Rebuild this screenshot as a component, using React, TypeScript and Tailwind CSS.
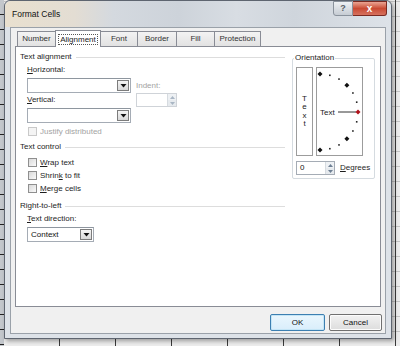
import React from 'react';

const font = "font-['Liberation_Sans',Arial,sans-serif]";

function U({ children }: { children: React.ReactNode }) {
  return <span className="underline underline-offset-[1px]">{children}</span>;
}

function SectionHeader({ label }: { label: string }) {
  return (
    <div className="flex h-[10px] items-center">
      <span className="leading-[10px] text-[#1e1e1e]">{label}</span>
      <div className="ml-[4px] h-px flex-1 bg-[#dddddd]" />
    </div>
  );
}

function DropArrow() {
  return (
    <svg width="7" height="5" viewBox="0 0 7 5">
      <path d="M0.5 1 H6.5 L3.5 4.5 Z" fill="#111" />
    </svg>
  );
}

function Combo({ width, value }: { width: string; value?: string }) {
  return (
    <div className={`flex h-[15px] ${width} border border-[#a5acb5] border-t-[#8e969f] bg-white`}>
      <div className="flex flex-1 items-center pl-[3px] leading-[10px] text-[#111]">{value}</div>
      <div className="m-px flex w-[12px] items-center justify-center border border-[#7c7c7c] bg-gradient-to-b from-[#f5f5f5] to-[#d8d8d8]">
        <DropArrow />
      </div>
    </div>
  );
}

function Spin({ width, value, disabled }: { width: string; value?: string; disabled?: boolean }) {
  return (
    <div className={`flex h-[14px] ${width} border ${disabled ? 'border-[#cfd3d8]' : 'border-[#a5acb5]'} bg-white`}>
      <div className="flex flex-1 items-center pl-[3px] leading-[10px] text-[#111]">{value}</div>
      <div className="flex w-[9px] flex-col border-l border-[#d6dbe0]">
        <div className="flex flex-1 items-center justify-center bg-[#eef1f4]">
          <svg width="5" height="3" viewBox="0 0 5 3">
            <path d="M0 3 L2.5 0 L5 3 Z" fill={disabled ? '#a9b6c4' : '#6d7f93'} />
          </svg>
        </div>
        <div className="flex flex-1 items-center justify-center bg-[#e6eaee]">
          <svg width="5" height="3" viewBox="0 0 5 3">
            <path d="M0 0 L2.5 3 L5 0 Z" fill={disabled ? '#a9b6c4' : '#6d7f93'} />
          </svg>
        </div>
      </div>
    </div>
  );
}

function Check({ children, disabled }: { children: React.ReactNode; disabled?: boolean }) {
  return (
    <div className="flex h-[9px] items-center pl-[1px]">
      <div
        className={`h-[9px] w-[9px] border ${
          disabled ? 'border-[#c9c9c9] bg-[#f4f4f4]' : 'border-[#8f8f8f] bg-gradient-to-br from-[#d9d9d9] to-[#fafafa]'
        }`}
      />
      <span className={`ml-[3px] leading-[10px] ${disabled ? 'text-[#a3a3a3]' : 'text-[#1e1e1e]'}`}>{children}</span>
    </div>
  );
}

const tabs = [
  { label: 'Number', w: 'w-[39px]' },
  { label: 'Alignment', w: 'w-[46px]', active: true },
  { label: 'Font', w: 'w-[38px]' },
  { label: 'Border', w: 'w-[39px]' },
  { label: 'Fill', w: 'w-[38px]' },
  { label: 'Protection', w: 'w-[46px]' },
];

function OrientationDial() {
  const cx = 3;
  const cy = 44;
  const r = 38;
  const pts = [90, 75, 60, 45, 30, 15, 0, -15, -30, -45, -60, -75, -90];
  return (
    <svg width="45" height="87" viewBox="0 0 45 87">
      {pts.map((a) => {
        const rad = (a * Math.PI) / 180;
        const x = cx + r * Math.cos(rad);
        const y = cy - r * Math.sin(rad);
        if (a === 0) {
          return <path key={a} d={`M${x} ${y - 2.5} L${x + 2.5} ${y} L${x} ${y + 2.5} L${x - 2.5} ${y} Z`} fill="#b0121b" />;
        }
        if (a % 45 === 0) {
          return <path key={a} d={`M${x} ${y - 2.5} L${x + 2.5} ${y} L${x} ${y + 2.5} L${x - 2.5} ${y} Z`} fill="#111" />;
        }
        return <rect key={a} x={x - 0.8} y={y - 0.8} width="1.6" height="1.6" fill="#222" />;
      })}
      <text x="3" y="47" fontSize="8" fontFamily="Liberation Sans, Arial, sans-serif" fill="#222">
        Text
      </text>
      <line x1="21" y1="44" x2="39" y2="44" stroke="#333" strokeWidth="1" />
    </svg>
  );
}

export default function App() {
  return (
    <div
      className={`flex h-[346px] w-[400px] overflow-hidden bg-[#ececec] bg-[repeating-linear-gradient(0deg,transparent_0px,transparent_14px,#c4c4c4_14px,#c4c4c4_15px)] text-[8px] ${font}`}
    >
      {/* row header strip of the sheet behind */}
      <div className="h-full w-[4px] shrink-0 bg-[#c3c7cc] bg-[repeating-linear-gradient(180deg,#c3c7cc_0px,#c3c7cc_14px,#222_14px,#222_15px)]" />

      <div className="flex h-full flex-1 flex-col bg-[repeating-linear-gradient(90deg,transparent_0px,transparent_55px,#3a3a3a_55px,#3a3a3a_56px)]">
        {/* dialog window */}
        <div className="flex h-[339px] w-[388px] flex-col rounded-t-[6px] border border-[#5e6570] bg-[#dde2e8] shadow-[2px_2px_4px_rgba(0,0,0,0.35)]">
          {/* title bar */}
          <div className="relative flex h-[26px] items-start rounded-t-[6px] bg-[linear-gradient(90deg,#e9e0cf_0%,#e3ddd3_18%,#d4d9df_28%,#cdd3da_45%,#d8dde3_60%,#cfd5dc_75%,#dde2e8_100%)]">
            <span className="ml-[7px] mt-[8px] text-[8.5px] leading-[10px] text-[#111]">Format Cells</span>
            <div className="ml-auto mr-[4px] flex">
              <div className="flex h-[15px] w-[20px] items-center justify-center rounded-bl-[3px] border border-[#8a929c] bg-gradient-to-b from-[#eef1f4] to-[#c6ccd3] text-[9px] font-bold text-[#5a5f66]">
                ?
              </div>
              <div className="flex h-[15px] w-[34px] items-center justify-center rounded-br-[3px] border border-l-0 border-[#7a2a22] bg-gradient-to-b from-[#e9a493] via-[#c94a33] to-[#d6715e] text-[10px] font-bold leading-none text-white">
                x
              </div>
            </div>
          </div>

          {/* client area */}
          <div className="mx-[5px] flex h-[307px] flex-col border border-[#9aa1a9] bg-[#f0f0f0]">
            {/* tabs */}
            <div className="ml-[6px] mt-[2px] flex h-[16px] items-end">
              {tabs.map((t) =>
                t.active ? (
                  <div
                    key={t.label}
                    className={`relative z-10 -mx-[1px] -mb-px flex h-[17px] ${t.w} items-start justify-center border border-b-0 border-[#898c95] bg-white pt-[3px] leading-[10px] text-[#222]`}
                  >
                    <span className="border border-dotted border-[#555] px-[1px] leading-[9px]">{t.label}</span>
                  </div>
                ) : (
                  <div
                    key={t.label}
                    className={`flex h-[15px] ${t.w} items-center justify-center border border-b-0 border-[#898c95] bg-gradient-to-b from-[#f3f3f3] to-[#e2e2e2] leading-[10px] text-[#333] [&+&]:border-l-0`}
                  >
                    {t.label}
                  </div>
                ),
              )}
            </div>

            {/* tab page */}
            <div className="mx-[4px] flex h-[261px] border border-[#898c95] bg-white">
              {/* left column */}
              <div className="flex w-[269px] flex-col pl-[4px] pt-[5px]">
                <SectionHeader label="Text alignment" />
                <div className="mt-[3px] flex pl-[7px]">
                  <div className="flex flex-col">
                    <span className="h-[10px] leading-[10px] text-[#1e1e1e]">
                      <U>H</U>orizontal:
                    </span>
                    <div className="mt-[3px]">
                      <Combo width="w-[104px]" />
                    </div>
                    <span className="mt-[2px] h-[10px] leading-[10px] text-[#1e1e1e]">
                      <U>V</U>ertical:
                    </span>
                    <div className="mt-[3px]">
                      <Combo width="w-[104px]" />
                    </div>
                  </div>
                  <div className="ml-[5px] flex flex-col pt-[16px]">
                    <span className="h-[10px] leading-[10px] text-[#a3a3a3]">Indent:</span>
                    <div className="mt-[2px]">
                      <Spin width="w-[41px]" disabled />
                    </div>
                  </div>
                </div>
                <div className="mt-[4px] pl-[7px]">
                  <Check disabled>Justify distributed</Check>
                </div>

                <div className="mt-[6px]">
                  <SectionHeader label="Text control" />
                </div>
                <div className="mt-[6px] flex flex-col gap-[4px] pl-[7px]">
                  <Check>
                    <U>W</U>rap text
                  </Check>
                  <Check>
                    Shrin<U>k</U> to fit
                  </Check>
                  <Check>
                    <U>M</U>erge cells
                  </Check>
                </div>

                <div className="mt-[8px]">
                  <SectionHeader label="Right-to-left" />
                </div>
                <div className="mt-[3px] flex flex-col pl-[7px]">
                  <span className="h-[10px] leading-[10px] text-[#1e1e1e]">
                    <U>T</U>ext direction:
                  </span>
                  <div className="mt-[3px]">
                    <Combo width="w-[67px]" value="Context" />
                  </div>
                </div>
              </div>

              {/* orientation group */}
              <div className="ml-[7px] mt-[11px] h-[121px] w-[83px]">
                <div className="relative flex h-full flex-col rounded-[2px] border border-[#d5dbe0] px-[3px] pt-[8px]">
                  <span className="absolute -top-[6px] left-[1px] bg-white px-px leading-[10px] text-[#1e1e1e]">
                    Orientation
                  </span>
                  <div className="flex gap-[3px]">
                    <div className="flex h-[89px] w-[17px] flex-col items-center justify-center border border-[#9c9c9c] leading-[8.4px] text-[#222]">
                      <span>T</span>
                      <span>e</span>
                      <span>x</span>
                      <span>t</span>
                    </div>
                    <div className="h-[89px] w-[47px] border border-[#9c9c9c]">
                      <OrientationDial />
                    </div>
                  </div>
                  <div className="mt-[5px] flex items-center">
                    <Spin width="w-[39px]" value="0" />
                    <span className="ml-[5px] leading-[10px] text-[#1e1e1e]">
                      <U>D</U>egrees
                    </span>
                  </div>
                </div>
              </div>
            </div>

            {/* buttons */}
            <div className="mr-[3px] mt-[7px] flex justify-end gap-[4px]">
              <div className="flex h-[17px] w-[55px] items-center justify-center rounded-[2px] border border-[#3c7fb1] bg-gradient-to-b from-[#eaf6fd] to-[#d9eefb] leading-[10px] text-[#111] shadow-[inset_0_0_0_1px_#c4e5f6]">
                OK
              </div>
              <div className="flex h-[17px] w-[53px] items-center justify-center rounded-[2px] border border-[#707070] bg-gradient-to-b from-[#f2f2f2] to-[#dddddd] leading-[10px] text-[#111] shadow-[inset_0_0_0_1px_#fcfcfc]">
                Cancel
              </div>
            </div>
          </div>
        </div>
      </div>
    </div>
  );
}
